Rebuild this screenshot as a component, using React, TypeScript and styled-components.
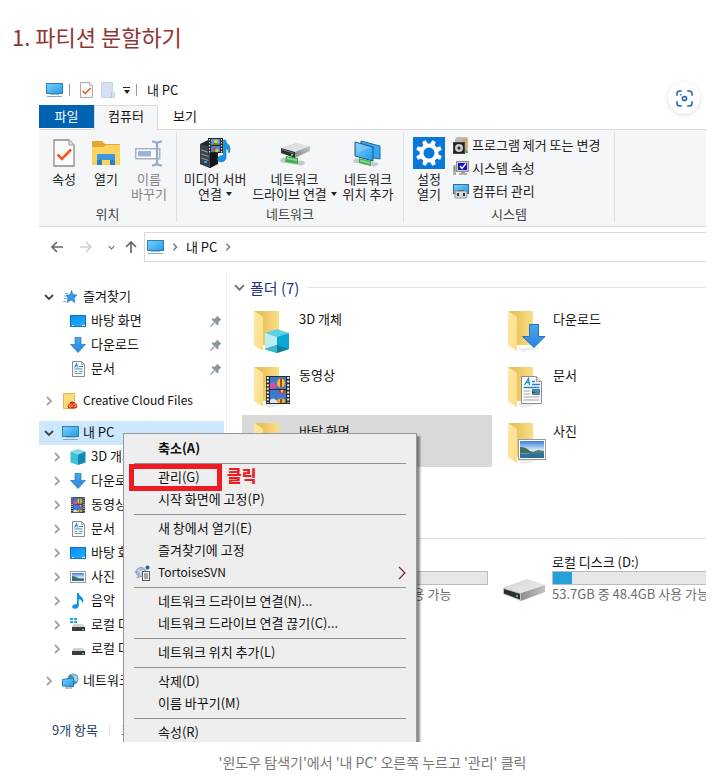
import React from "react";
import styled, { createGlobalStyle, css } from "styled-components";

const GlobalStyle = createGlobalStyle`
  * { box-sizing: border-box; }
  body {
    margin: 0;
    background: #fff;
    color: #111;
    font-family: "Noto Sans CJK KR", "Noto Sans", sans-serif;
    font-size: 13px;
    line-height: 16px;
  }
  button {
    margin: 0;
    padding: 0;
    border: 0;
    background: none;
    color: inherit;
    font: inherit;
    text-align: left;
    white-space: nowrap;
  }
  svg { display: block; flex: none; }
`;

/* ---------- icons ---------- */

const HiddenSvg = styled.svg`
  position: absolute;
`;

const Gradients = () => (
  <HiddenSvg width="0" height="0" aria-hidden="true">
    <defs>
      <linearGradient id="screen" x1="0" y1="0" x2="1" y2="1">
        <stop offset="0" stopColor="#7fd0fb" />
        <stop offset="1" stopColor="#1e9bea" />
      </linearGradient>
      <linearGradient id="desk" x1="0" y1="0" x2="1" y2="1">
        <stop offset="0" stopColor="#0b8cf5" />
        <stop offset="1" stopColor="#22b2fb" />
      </linearGradient>
      <linearGradient id="folderBack" x1="0" y1="0" x2="1" y2="0">
        <stop offset="0.3" stopColor="#e9c25e" />
        <stop offset="1" stopColor="#fbdf85" />
      </linearGradient>
      <linearGradient id="folderFlap" x1="0" y1="0" x2="1" y2="1">
        <stop offset="0" stopColor="#ffe9a8" />
        <stop offset="1" stopColor="#fbdb86" />
      </linearGradient>
      <linearGradient id="arrow" x1="0" y1="0" x2="0" y2="1">
        <stop offset="0" stopColor="#49a5ee" />
        <stop offset="1" stopColor="#2a86dc" />
      </linearGradient>
      <linearGradient id="driveTop" x1="0" y1="0" x2="1" y2="1">
        <stop offset="0" stopColor="#d2d4d6" />
        <stop offset="1" stopColor="#ececee" />
      </linearGradient>
      <linearGradient id="driveSide" x1="0" y1="0" x2="1" y2="0">
        <stop offset="0" stopColor="#8d8f91" />
        <stop offset="1" stopColor="#bfc1c3" />
      </linearGradient>
      <linearGradient id="sky" x1="0" y1="0" x2="0" y2="1">
        <stop offset="0" stopColor="#3f7fd6" />
        <stop offset="0.55" stopColor="#d6ecfb" />
        <stop offset="1" stopColor="#3a7fb5" />
      </linearGradient>
    </defs>
  </HiddenSvg>
);

const MonitorIcon = () => (
  <svg width="17" height="16" viewBox="0 0 17 16">
    <rect x="0.5" y="1.5" width="16" height="10" fill="url(#screen)" stroke="#2c7fb8" />
    <rect x="7" y="12" width="3" height="1" fill="#b7c9d6" />
    <rect x="4" y="12" width="9" height="1" fill="#a9bfce" />
    <rect x="1" y="14" width="15" height="1" fill="#8fa6b5" />
  </svg>
);

const CheckPageIcon = ({ width, height }: { width: number; height: number }) => (
  <svg width={width} height={height} viewBox="0 0 22 28" preserveAspectRatio="none">
    <path d="M1 1h15l5 5v21H1z" fill="#fbfbfb" stroke="#8b8b8b" strokeWidth="1.3" />
    <path d="M16 1v5h5" fill="#e5e5e5" stroke="#9b9b9b" />
    <path d="M4.500 15.500l4.500 4.500 9-9.500" fill="none" stroke="#f0591e" strokeWidth="2.600" />
  </svg>
);

const PaleFolderIcon = () => (
  <svg width="14" height="16" viewBox="0 0 14 16">
    <path d="M0.500 0.500h11v9l2 1v5H0.500z" fill="#d5e1f3" stroke="#c3d2ea" />
    <path d="M10.500 10v5" stroke="#b5c7e4" />
  </svg>
);

const OpenFolderIcon = () => (
  <svg width="28" height="26" viewBox="0 0 28 26">
    <path d="M0 2q0-1 1-1h9l3 3h14q1 0 1 1v20H0z" fill="#e5a52e" />
    <path d="M0 7h11l3-2h14v19q0 1-1 1H1q-1 0-1-1z" fill="#fcd35f" />
    <path d="M5 25V15q0-1 1-1h16q1 0 1 1v10h-5v-5h-8v5z" fill="#3a97e2" />
    <path d="M5 20l5 0v5H5zM18 20h5v5h-5z" fill="#2d7fcb" />
  </svg>
);

const RenameIcon = () => (
  <svg width="28" height="27" viewBox="0 0 28 27">
    <rect x="0.750" y="8.750" width="24" height="10" fill="#fafcfe" stroke="#a3b2c9" strokeWidth="1.500" />
    <rect x="3" y="11" width="13" height="5.500" fill="#9fb3d1" />
    <path d="M17 1.500q5 0 5 3v18q0 3-5 3M27 1.500q-5 0-5 3v18q0 3 5 3" fill="none" stroke="#96a8c4" strokeWidth="2.200" />
  </svg>
);

const MediaServerIcon = () => (
  <svg width="32" height="32" viewBox="0 0 32 32">
    <path d="M1 7l8-4 10 2v21l-8 5-10-4z" fill="#23272c" />
    <path d="M1 7l10 3v21L1 27z" fill="#3b4248" />
    <path d="M11 10l8-4v21l-8 4z" fill="#14171a" />
    <path d="M2.500 13l7 2.500M2.500 17l7 2.500M2.500 21l7 2.500" stroke="#8d99a3" strokeWidth="1.200" />
    <rect x="5" y="24" width="3" height="2" fill="#29a8f0" />
    <rect x="9" y="1" width="15" height="15" fill="#262626" />
    <path d="M10.500 2v14M22.500 2v14" stroke="#eee" strokeWidth="1.200" strokeDasharray="1.500 1.500" />
    <rect x="12" y="2" width="9" height="6" fill="#4f9be8" />
    <rect x="12" y="9" width="9" height="6" fill="#3f86d8" />
    <circle cx="17" cy="4.500" r="2" fill="#f2c81d" />
    <path d="M12 8l3-2 6 1v1z" fill="#4c8a35" />
    <circle cx="15" cy="12" r="1.800" fill="#e0402e" />
    <circle cx="18" cy="13.500" r="1.800" fill="#e9c61b" />
    <path d="M24.500 3h2q0.500 3 3 5 3 3 0.500 8-0.500-4-3-5v10q-1 4-5 4-3.500-0.500-3.500-3 0.500-3.500 6-3.500z" fill="#1296e6" stroke="#0b6fb5" strokeWidth="0.600" />
  </svg>
);

const Plug = () => (
  <g>
    <path d="M1 20l3-2.500 4 1 12 2 5 0.500 1 3-4 2-3-1-12-2-5-0.500z" fill="#c7cacc" />
    <path d="M7 16l12 2v6L6 22z" fill="#3fae49" />
    <path d="M8 17.500l10 1.500v2L8 19.500z" fill="#7fdc83" />
  </g>
);

const NetDriveIcon = () => (
  <svg width="32" height="26" viewBox="0 0 32 26">
    <Plug />
    <path d="M2 8L17 3l14 3-13 6z" fill="url(#driveTop)" />
    <path d="M2 8l14 4v6L2 13z" fill="#2d2d2d" />
    <path d="M16 12l15-6v5l-15 7z" fill="url(#driveSide)" />
    <path d="M3 9l12 3.700v1L3 10z" fill="#777" />
    <rect x="12" y="14" width="2" height="2" fill="#43e04a" />
  </svg>
);

const NetPlaceIcon = () => (
  <svg width="30" height="28" viewBox="0 0 30 28">
    <path d="M8 2l19 5v13L8 17z" fill="#3aa7f0" stroke="#1c6ca8" />
    <path d="M2 3l18 5v14L2 17z" fill="url(#screen)" stroke="#20557d" />
    <path d="M3 4l15 4.500L4 14z" fill="#8fd3fb" opacity="0.500" />
    <path d="M0 21l4-1.500 17 3.500 4 1 0 2-3 1.500-16-3.500-5 0z" fill="#c7cacc" />
    <path d="M6 19l12 3 0 5-12-3z" fill="#3fae49" />
    <path d="M7 20.500l10 2.500v2l-10-2.500z" fill="#7fdc83" />
  </svg>
);

const GearIcon = () => (
  <svg width="32" height="32" viewBox="0 0 32 32">
    <rect width="32" height="32" fill="#0878d8" />
    <circle cx="16" cy="16" r="7.500" fill="none" stroke="#fff" strokeWidth="4" />
    {[22.5, 67.5, 112.5, 157.5, 202.5, 247.5, 292.5, 337.5].map((a) => (
      <path key={a} d="M13.500 7.500l0.600-4.500h3.800l0.600 4.500z" fill="#fff" transform={`rotate(${a} 16 16)`} />
    ))}
  </svg>
);

const UninstallIcon = () => (
  <svg width="16" height="17" viewBox="0 0 16 17">
    <path d="M2 2l2-2h10l1 2v14H2z" fill="#b9bab4" />
    <path d="M9 2h5v10h-5z" fill="#e6a15f" />
    <path d="M10 9l5 6v1h-6z" fill="#6fa47c" />
    <rect x="0.500" y="5.500" width="11" height="11" fill="#1f2220" stroke="#444" />
    <circle cx="6" cy="11" r="4" fill="#c9cfcc" />
    <circle cx="6" cy="11" r="1.500" fill="#1f2220" />
  </svg>
);

const SystemIcon = () => (
  <svg width="16" height="16" viewBox="0 0 16 16">
    <rect x="0" y="5" width="3" height="10" fill="#b4b4ae" />
    <rect x="1" y="7" width="1" height="4" fill="#3da04a" />
    <rect x="3.500" y="1.500" width="12" height="10" fill="#cfcec8" stroke="#8f8f88" />
    <rect x="5" y="3" width="9" height="7" fill="#1414c8" />
    <path d="M7 6l2 2.500 4-5" fill="none" stroke="#fff" strokeWidth="1.400" />
    <rect x="8" y="12" width="4" height="1" fill="#9a9a94" />
    <rect x="6" y="13" width="8" height="2" fill="#b3b2ab" />
  </svg>
);

const ManageIcon = () => (
  <svg width="16" height="16" viewBox="0 0 16 16">
    <rect x="0.500" y="1.500" width="15" height="9" fill="url(#screen)" stroke="#2c6f9f" />
    <path d="M5.500 8.500v-1h5v1" fill="none" stroke="#555" />
    <rect x="2" y="8" width="12" height="7" rx="1" fill="#d4d6d8" stroke="#7b7d80" strokeWidth="0.800" />
    <rect x="4" y="10" width="2" height="3" fill="#333" />
    <rect x="10" y="10" width="2" height="3" fill="#333" />
  </svg>
);

const Chevron = ({ open, color, size = 10 }: { open?: boolean; color: string; size?: number }) => (
  <svg width={size} height={size} viewBox="0 0 10 10">
    <path d={open ? "M1 3l4 4 4-4" : "M3 1l4 4-4 4"} fill="none" stroke={color} strokeWidth="1.800" />
  </svg>
);

const ArrowIcon = ({ angle, color }: { angle: number; color: string }) => (
  <svg width="14" height="14" viewBox="0 0 14 14">
    <path d="M13 7H2M7 2L2 7l5 5" fill="none" stroke={color} strokeWidth="1.700" transform={`rotate(${angle} 7 7)`} />
  </svg>
);

const Caret = () => (
  <svg width="6" height="4" viewBox="0 0 6 4">
    <path d="M0 0h6L3 4z" fill="#222" />
  </svg>
);

const StarIcon = () => (
  <svg width="16" height="16" viewBox="0 0 16 16">
    <path d="M9.500 1.500l1.500 4 4 0.500-3 3 1 4.500-4-2.500-4 2.500 1-4.500-2-3h4z" fill="#2f9be8" stroke="#1773bd" strokeWidth="0.600" />
    <path d="M3 4.500h3M2 7h3M2 9.500h3M1 12.500h3" stroke="#63b7ee" strokeWidth="1.200" />
  </svg>
);

const DesktopIcon = () => (
  <svg width="16" height="16" viewBox="0 0 16 16">
    <rect x="0.500" y="2.500" width="15" height="11" fill="url(#desk)" stroke="#1272c2" />
    <path d="M2 12.500h2M12 12.500h3" stroke="#d5efff" />
  </svg>
);

const DownIcon = () => (
  <svg width="16" height="16" viewBox="0 0 16 16">
    <path d="M5 0.500h6v7h4.500L8 15.500 0.500 7.500H5z" fill="url(#arrow)" stroke="#2375bd" strokeWidth="0.700" />
  </svg>
);

const DocIcon = () => (
  <svg width="13" height="16" viewBox="0 0 13 16">
    <path d="M0.500 0.500h9l3 3v12H0.500z" fill="#fdfdfd" stroke="#8c8c8c" />
    <path d="M9.500 0.500v3h3" fill="none" stroke="#999" strokeWidth="0.700" />
    <path d="M2.500 6.500L4.500 3l1 3.500M7 5.500h4M2.500 8h8" fill="none" stroke="#1f87cf" strokeWidth="1.200" />
    <path d="M2.500 10.500h3M2.500 12.500h8M7 10.500h4" stroke="#7f97a6" />
  </svg>
);

const CreativeCloudIcon = () => (
  <svg width="15" height="16" viewBox="0 0 15 16">
    <path d="M0.500 0.500h11v15H0.500z" fill="#fbdc7d" stroke="#e2b64c" />
    <path d="M7 15.500h5q2.500-0.300 2.500-2.800-0.300-2-2-2.400Q11 8 8.500 8.500 6.500 9.300 6.300 11 4.500 11.500 4.500 13.200q0.200 2.200 2.500 2.300z" fill="#e0261b" />
    <path d="M10 13.500l-2-2q-2 0-2 1.300 0.200 1.200 1.500 1.200 1 0 2-1.500t2-1.500q1.500 0.200 1.500 1.500t-1.500 1.400" fill="none" stroke="#fbdc7d" strokeWidth="0.900" />
  </svg>
);

const CubeShape = () => (
  <g>
    <path d="M12 0l12 4-12 5L0 4z" fill="#5fd0e3" />
    <path d="M0 4l12 4v16L0 20z" fill="#b9ecf3" />
    <path d="M12 8l12-4v16l-12 4z" fill="#0aa6d6" />
    <path d="M0 20l12-4 12 4-12 4z" fill="#0f7d9c" />
    <path d="M0 20l12-4v8z" fill="#3fb5c6" />
  </g>
);

const SmallCubeIcon = () => (
  <svg width="16" height="16" viewBox="0 0 16 16">
    <path d="M8 0l7.500 2.500L8 5.500 0.500 2.500z" fill="#7fdbe8" />
    <path d="M0.500 2.500L8 5.500V16l-7.500-2.500z" fill="#3fc0d8" />
    <path d="M8 5.500l7.500-3v11L8 16z" fill="#1189b0" />
  </svg>
);

const FilmShape = () => (
  <g>
    <rect width="24" height="28" fill="#2c2c2c" />
    <path d="M1.800 1v27M22.200 1v27" stroke="#f3f3f3" strokeWidth="2" strokeDasharray="2 1.600" />
    <rect x="4" y="1" width="16" height="12" fill="#3f78cf" />
    <rect x="4" y="14" width="16" height="13" fill="#3f78cf" />
    <path d="M4 8l4-2 3 4-3 3H4z" fill="#d8509a" />
    <ellipse cx="15" cy="7" rx="4" ry="4.500" fill="#f0c419" />
    <path d="M15 2.500v9" stroke="#b31f24" strokeWidth="1.600" />
    <path d="M12 14h8l-4 5z" fill="#d42b2b" />
    <path d="M14.500 14l1.500 4 1.500-4z" fill="#f3cd2b" />
    <path d="M4 24q3-3 6 0t3 3H4z" fill="#dfe8f8" />
    <ellipse cx="15" cy="25" rx="4" ry="2.500" fill="#e6b91e" />
    <path d="M15 23v4" stroke="#b31f24" strokeWidth="1.600" />
    <rect y="27" width="24" height="1" fill="#2c2c2c" />
  </g>
);

const FilmIcon = () => (
  <svg width="14" height="16" viewBox="0 0 24 28" preserveAspectRatio="none">
    <FilmShape />
  </svg>
);

const PhotoShape = () => (
  <g>
    <rect x="0.500" y="0.500" width="27" height="20" fill="#fff" stroke="#9a9a9a" />
    <rect x="2" y="2" width="24" height="17" fill="url(#sky)" />
    <path d="M2 8q6 0 10 4l6 2H2z" fill="#3f7250" />
    <path d="M12 14l8-3 6 1v3H10z" fill="#4f7f66" />
    <path d="M2 14.500h24V19H2z" fill="#2f6f9f" />
  </g>
);

const PhotoIcon = () => (
  <svg width="16" height="12" viewBox="0 0 16 12">
    <rect x="0.500" y="0.500" width="15" height="11" fill="#fff" stroke="#9a9a9a" />
    <rect x="2" y="2" width="12" height="8" fill="url(#sky)" />
    <path d="M2 5q4 0 7 2.500h5V8H2z" fill="#3f7250" />
    <path d="M2 8h12v2H2z" fill="#2f6f9f" />
  </svg>
);

const MusicIcon = () => (
  <svg width="12" height="16" viewBox="0 0 12 16">
    <path d="M5 0h1.600q0.400 2.500 3 4 3 2.500 1 6.500 0-3-3.800-4.500V12.500q-0.300 3-3.500 3.300Q0.200 15.800 0.200 13.500 0.400 11 5 11z" fill="#0d95ea" />
  </svg>
);

const DiskIcon = ({ system }: { system?: boolean }) => (
  <svg width="16" height="16" viewBox="0 0 16 16">
    {system && <path d="M0 1h3v2H0zM4 1h3v2H4zM0 4h3v2H0zM4 4h3v2H4z" fill="#13a9ee" />}
    <path d="M4 7h9l2.500 3.500h-14z" fill="#d3d4d6" />
    <rect x="2" y="10" width="13" height="4" fill="#3a3d40" />
    <rect x="12" y="12" width="2" height="1" fill="#4be04e" />
  </svg>
);

const NetworkIcon = () => (
  <svg width="17" height="16" viewBox="0 0 17 16">
    <circle cx="11" cy="6" r="5.500" fill="#4f8db5" />
    <path d="M8.500 1.500q3.500 1 3 3.500t3.500 4q1.500-3.500-0.500-6t-6-1.500z" fill="#a9d0e0" />
    <path d="M0.500 6.500l11-1.500v8.500L0.500 13z" fill="url(#screen)" stroke="#2576ad" />
    <path d="M3 15h7" stroke="#6e8ca0" />
  </svg>
);

const PinIcon = () => (
  <svg width="12" height="12" viewBox="0 0 12 12">
    <path d="M7 0.500L11.500 5l-1.500 0.500-1.500 1.500v2.500l-1 1L1.500 4.500l1-1H5L6.500 2z" fill="#8b969e" />
    <path d="M4 8L0.500 11.500" stroke="#8b969e" strokeWidth="1.300" />
  </svg>
);

const TortoiseIcon = () => (
  <svg width="16" height="16" viewBox="0 0 16 16">
    <ellipse cx="7" cy="7" rx="5" ry="4.500" fill="#a9bfe6" stroke="#7c93bd" strokeWidth="0.800" />
    <path d="M4 5l3 2 3-2M7 7v4" fill="none" stroke="#e2eaf8" />
    <path d="M0 7l3-1v3zM2 13l3-3 2 1-2 2z" fill="#8fa5cc" />
    <circle cx="13.500" cy="2.500" r="2" fill="#2e5f86" />
    <rect x="8.500" y="6.500" width="7" height="9" fill="#f4f4f4" stroke="#5b5b5b" />
    <path d="M10 9h4M10 11h4M10 13h4" stroke="#555" />
  </svg>
);

const LensIcon = () => (
  <svg width="17" height="17" viewBox="0 0 18 18" fill="none" stroke="#1763b5" strokeWidth="1.600" strokeLinecap="round">
    <path d="M1 5.500V4q0-3 3-3h1.500M12.500 1H14q3 0 3 3v1.500M17 12.500V14q0 3-3 3h-1.500M5.500 17H4q-3 0-3-3v-1.500" />
    <circle cx="9" cy="9" r="2.200" />
    <path d="M5 5h0.100" />
  </svg>
);

const BigDriveIcon = () => (
  <svg width="44" height="24" viewBox="0 0 44 24">
    <path d="M1 9.500L25 1l18 6-25 8z" fill="url(#driveTop)" />
    <path d="M1 9.500L19 15v8L1 16z" fill="#bcbec0" />
    <path d="M2 11l16 5v5.500L2 15.500z" fill="#292b2d" />
    <path d="M19 15l24-8v7l-24 9z" fill="url(#driveSide)" />
    <rect x="14" y="17" width="2" height="2" fill="#39d843" />
  </svg>
);

type FolderKind = "cube" | "down" | "film" | "doc" | "photo" | "desktop" | "music";

const FolderIcon = ({ kind }: { kind: FolderKind }) => (
  <svg width="40" height="44" viewBox="0 0 40 44">
    <path d="M9 37l28-1-22 5z" fill="#ededed" />
    <path d="M0 0h25v34H6z" fill="url(#folderBack)" />
    <path d="M0 0l8 5q1 1 1 2v33L1 35q-1-1-1-2z" fill="url(#folderFlap)" />
    {kind === "cube" && (
      <g transform="translate(11 18)">
        <CubeShape />
      </g>
    )}
    {kind === "down" && (
      <path d="M21.500 13.500h9v12h6.500L26 36.500 14.500 25.500h7z" fill="url(#arrow)" stroke="#2375bd" />
    )}
    {kind === "film" && (
      <g transform="translate(12 9)">
        <FilmShape />
      </g>
    )}
    {kind === "doc" && (
      <g transform="translate(13 9)">
        <path d="M0.500 0.500h15l5 5v22H0.500z" fill="#fdfdfd" stroke="#8c8c8c" />
        <path d="M15.500 0.500v5h5" fill="#e4e4e4" stroke="#999" />
        <path d="M3.500 9L7.500 2.500 8.500 9M5 6.500h3M11 5.500h3M11 8.500h8M2.500 11.500h16" fill="none" stroke="#1f87cf" strokeWidth="1.300" />
        <path d="M2.500 15h7M2.500 18h7M2.500 21h16M2.500 24h16" stroke="#a3a3a3" />
        <rect x="11" y="13" width="8" height="6" fill="#4c86a8" />
        <path d="M11 15l4 2h-4z" fill="#24543a" />
      </g>
    )}
    {kind === "photo" && (
      <g transform="translate(10 16)">
        <PhotoShape />
      </g>
    )}
  </svg>
);

/* ---------- layout ---------- */

const Article = styled.article`
  padding: 21px 14px 12px 12px;
`;

const Heading = styled.h2`
  margin: 0;
  color: #8f3531;
  font-size: 22px;
  font-weight: 400;
  line-height: 30px;
`;

const Figure = styled.figure`
  margin: 24px 0 0 27px;
`;

const Caption = styled.figcaption`
  margin-top: 10px;
  color: #777;
  font-size: 14px;
  line-height: 20px;
  text-align: center;
`;

const Explorer = styled.div`
  position: relative;
  overflow: hidden;
`;

const TitleBar = styled.header`
  display: flex;
  align-items: center;
  height: 30px;
  padding: 0 7px;
  gap: 8px;
`;

const QuickDivider = styled.span`
  width: 1px;
  height: 12px;
  margin: 0 2px 0 -2px;
  background: #999;
`;

const QuickButton = styled.button`
  display: grid;
  gap: 2px;
  justify-items: center;
`;

const QuickBar = styled.span`
  width: 7px;
  height: 1px;
  background: #222;
`;

const LensButton = styled.button`
  position: absolute;
  top: 7px;
  right: 6px;
  display: grid;
  place-items: center;
  width: 32px;
  height: 32px;
  border-radius: 50%;
  background: #fff;
  box-shadow: 0 1px 5px rgba(0, 0, 0, 0.14);
`;

const Tabs = styled.div`
  display: flex;
  height: 25px;
  border-bottom: 1px solid #d9dadb;
`;

const Tab = styled.button<{ $kind?: "file" | "active" }>`
  width: ${(p) => (p.$kind === "file" ? 55 : p.$kind === "active" ? 64 : 54)}px;
  height: 23px;
  padding-bottom: 2px;
  text-align: center;
  ${(p) =>
    p.$kind === "file" &&
    css`
      background: #0063b1;
      color: #fff;
    `}
  ${(p) =>
    p.$kind === "active" &&
    css`
      height: 25px;
      padding-bottom: 4px;
      border: 1px solid #d9dadb;
      border-bottom: 0;
      background: #f5f6f7;
    `}
`;

const Ribbon = styled.div`
  display: flex;
  height: 97px;
  padding: 2px 0 4px;
  border-bottom: 1px solid #d9dadb;
  background: #f5f6f7;
`;

const RibbonGroup = styled.section<{ $width: number }>`
  display: flex;
  flex: none;
  flex-direction: column;
  justify-content: space-between;
  width: ${(p) => p.$width}px;
  border-right: 1px solid #dfe0e1;
`;

const GroupButtons = styled.div`
  display: flex;
  align-items: flex-start;
  padding-left: 4px;
`;

const GroupName = styled.div`
  color: #444;
  text-align: center;
`;

const BigButton = styled.button<{ $width: number; $disabled?: boolean }>`
  width: ${(p) => p.$width}px;
  color: ${(p) => (p.$disabled ? "#858585" : "#222")};
  line-height: 15px;
  text-align: center;
`;

const BigIcon = styled.span`
  display: grid;
  place-items: center;
  height: 36px;
  margin-top: 3px;
`;

const LabelLine = styled.span`
  display: flex;
  align-items: center;
  justify-content: center;
  gap: 4px;
`;

const SmallButtons = styled.div`
  display: flex;
  flex-direction: column;
  gap: 7px;
  padding: 5px 0 0 3px;
`;

const SmallButton = styled.button`
  display: flex;
  align-items: center;
  gap: 3px;
  height: 16px;
  color: #222;
`;

const AddressRow = styled.div`
  display: flex;
  align-items: center;
  padding-top: 5px;
`;

const NavButtons = styled.div`
  display: flex;
  align-items: center;
  width: 105px;
  padding-left: 11px;
`;

const NavButton = styled.button<{ $space: number }>`
  margin-right: ${(p) => p.$space}px;
`;

const AddressBox = styled.div`
  display: flex;
  flex: 1;
  align-items: center;
  gap: 7px;
  height: 30px;
  padding-left: 2px;
  border: 1px solid #d9d9d9;
  border-right: 0;
`;

const Body = styled.div`
  display: flex;
  padding-top: 10px;
`;

const Tree = styled.nav`
  flex: none;
  width: 188px;
  padding: 13px 2px 17px 0;
  border-right: 1px solid #f0f0f0;
`;

const TreeGroup = styled.div`
  margin-bottom: 8px;
`;

const TreeRow = styled.button<{ $level: number; $selected?: boolean }>`
  display: flex;
  align-items: center;
  width: 100%;
  height: 24px;
  padding: 0 2px 0 ${(p) => 4 + p.$level * 8}px;
  background: ${(p) => (p.$selected ? "#cce8ff" : "none")};
`;

const ChevronSlot = styled.span`
  display: grid;
  place-items: center;
  width: 12px;
  margin-right: 7px;
`;

const IconSlot = styled.span`
  display: grid;
  place-items: center;
  width: 16px;
  margin-right: 5px;
`;

const RowText = styled.span<{ $compact?: boolean }>`
  flex: 1;
  padding-bottom: 2px;
  font-size: ${(p) => (p.$compact ? 12 : 13)}px;
`;

const Content = styled.main`
  flex: 1;
  min-width: 0;
  overflow: hidden;
  padding-left: 7px;
`;

const SectionHeader = styled.h3`
  display: flex;
  align-items: center;
  gap: 5px;
  height: 31px;
  margin: 0;
  color: #1e3287;
  font-size: 15px;
  font-weight: 400;

  &::after {
    content: "";
    flex: 1;
    height: 1px;
    margin-left: 3px;
    background: #e2e2e2;
  }
`;

const Tiles = styled.div`
  display: grid;
  grid-template-columns: 250px 250px;
  gap: 4px;
  padding-left: 8px;
`;

const Tile = styled.button<{ $selected?: boolean }>`
  display: flex;
  align-items: flex-start;
  gap: 5px;
  height: 52px;
  padding: 8px 0 0 12px;
  background: ${(p) => (p.$selected ? "#d9d9d9" : "none")};
`;

const DriveTile = styled.button`
  display: flex;
  align-items: flex-end;
  gap: 6px;
  padding-left: 6px;
`;

const DriveInfo = styled.span`
  display: grid;
  gap: 1px;
`;

const DriveBar = styled.span`
  display: block;
  width: 190px;
  height: 14px;
  border: 1px solid #bcbcbc;
  background: #e6e6e6;
`;

const DriveFill = styled.span`
  display: block;
  height: 100%;
  background: #26a0da;
`;

const Muted = styled.span`
  color: #6d6d6d;
`;

const StatusBar = styled.footer`
  display: flex;
  align-items: center;
  gap: 11px;
  height: 24px;
  padding-left: 13px;
  color: #26416a;
`;

const StatusDivider = styled.span`
  width: 1px;
  height: 12px;
  background: #e6e6e6;
`;

const Menu = styled.div`
  position: absolute;
  top: 358px;
  left: 84px;
  width: 294px;
  padding: 4px 10px;
  border: 1px solid #979797;
  background: #eee;
  box-shadow: 3px 3px 2px rgba(0, 0, 0, 0.45);
`;

const MenuItem = styled.button<{ $bold?: boolean }>`
  position: relative;
  display: flex;
  align-items: center;
  width: 100%;
  height: 22px;
  font-weight: ${(p) => (p.$bold ? 700 : 400)};
`;

const MenuIcon = styled.span`
  width: 24px;
`;

const MenuSeparator = styled.hr`
  height: 1px;
  margin: 3px 0;
  border: 0;
  background: #919191;
`;

const RedFrame = styled.span`
  position: absolute;
  top: -3px;
  left: -5px;
  width: 93px;
  height: 27px;
  border: 5px solid #ed1c24;
`;

const ClickNote = styled.strong`
  position: absolute;
  left: 93px;
  top: -3px;
  color: #ed1c24;
  font-size: 16px;
  font-weight: 900;
  line-height: 22px;
`;

/* ---------- data ---------- */

type Row = {
  text: string;
  icon: React.ReactNode;
  level: number;
  open?: boolean;
  leaf?: boolean;
  selected?: boolean;
  compact?: boolean;
};

const tree: Row[][] = [
  [
    { text: "즐겨찾기", icon: <StarIcon />, level: 0, open: true },
    { text: "바탕 화면", icon: <DesktopIcon />, level: 1, leaf: true },
    { text: "다운로드", icon: <DownIcon />, level: 1, leaf: true },
    { text: "문서", icon: <DocIcon />, level: 1, leaf: true },
  ],
  [{ text: "Creative Cloud Files", icon: <CreativeCloudIcon />, level: 0, compact: true }],
  [
    { text: "내 PC", icon: <MonitorIcon />, level: 0, open: true, selected: true },
    { text: "3D 개체", icon: <SmallCubeIcon />, level: 1 },
    { text: "다운로드", icon: <DownIcon />, level: 1 },
    { text: "동영상", icon: <FilmIcon />, level: 1 },
    { text: "문서", icon: <DocIcon />, level: 1 },
    { text: "바탕 화면", icon: <DesktopIcon />, level: 1 },
    { text: "사진", icon: <PhotoIcon />, level: 1 },
    { text: "음악", icon: <MusicIcon />, level: 1 },
    { text: "로컬 디스크 (C:)", icon: <DiskIcon system />, level: 1 },
    { text: "로컬 디스크 (D:)", icon: <DiskIcon />, level: 1 },
  ],
  [{ text: "네트워크", icon: <NetworkIcon />, level: 0 }],
];

const folders: { text: string; kind: FolderKind; selected?: boolean }[] = [
  { text: "3D 개체", kind: "cube" },
  { text: "다운로드", kind: "down" },
  { text: "동영상", kind: "film" },
  { text: "문서", kind: "doc" },
  { text: "바탕 화면", kind: "desktop", selected: true },
  { text: "사진", kind: "photo" },
  { text: "음악", kind: "music" },
];

const drives = [
  { text: "로컬 디스크 (C:)", note: "111GB 중 64.2GB 사용 가능", used: 42 },
  { text: "로컬 디스크 (D:)", note: "53.7GB 중 48.4GB 사용 가능", used: 10 },
];

type Entry = { text: string; bold?: boolean; marked?: boolean; icon?: React.ReactNode; more?: boolean };

const menu: Entry[][] = [
  [{ text: "축소(A)", bold: true }],
  [{ text: "관리(G)", marked: true }, { text: "시작 화면에 고정(P)" }],
  [
    { text: "새 창에서 열기(E)" },
    { text: "즐겨찾기에 고정" },
    { text: "TortoiseSVN", icon: <TortoiseIcon />, more: true },
  ],
  [{ text: "네트워크 드라이브 연결(N)..." }, { text: "네트워크 드라이브 연결 끊기(C)..." }],
  [{ text: "네트워크 위치 추가(L)" }],
  [{ text: "삭제(D)" }, { text: "이름 바꾸기(M)" }],
  [{ text: "속성(R)" }],
];

type BigProps = { icon: React.ReactNode; lines: string[]; width: number; caret?: boolean; disabled?: boolean };

const RibbonButton = ({ icon, lines, width, caret, disabled }: BigProps) => (
  <BigButton $width={width} $disabled={disabled} disabled={disabled}>
    <BigIcon>{icon}</BigIcon>
    {lines.map((line, i) => (
      <LabelLine key={line}>
        {line}
        {caret && i === lines.length - 1 && <Caret />}
      </LabelLine>
    ))}
  </BigButton>
);

const App = () => (
  <>
    <GlobalStyle />
    <Gradients />
    <Article>
      <Heading>1. 파티션 분할하기</Heading>
      <Figure>
        <Explorer>
          <TitleBar>
            <MonitorIcon />
            <QuickDivider />
            <CheckPageIcon width={13} height={16} />
            <PaleFolderIcon />
            <QuickButton aria-label="빠른 실행 도구 모음">
              <QuickBar />
              <Caret />
            </QuickButton>
            <QuickDivider />
            <span>내 PC</span>
          </TitleBar>
          <LensButton aria-label="이미지 검색">
            <LensIcon />
          </LensButton>

          <Tabs>
            <Tab $kind="file">파일</Tab>
            <Tab $kind="active">컴퓨터</Tab>
            <Tab>보기</Tab>
          </Tabs>

          <Ribbon>
            <RibbonGroup $width={138}>
              <GroupButtons>
                <RibbonButton width={42} icon={<CheckPageIcon width={22} height={28} />} lines={["속성"]} />
                <RibbonButton width={42} icon={<OpenFolderIcon />} lines={["열기"]} />
                <RibbonButton width={44} icon={<RenameIcon />} lines={["이름", "바꾸기"]} disabled />
              </GroupButtons>
              <GroupName>위치</GroupName>
            </RibbonGroup>
            <RibbonGroup $width={227}>
              <GroupButtons>
                <RibbonButton width={68} icon={<MediaServerIcon />} lines={["미디어 서버", "연결"]} caret />
                <RibbonButton width={91} icon={<NetDriveIcon />} lines={["네트워크", "드라이브 연결"]} caret />
                <RibbonButton width={56} icon={<NetPlaceIcon />} lines={["네트워크", "위치 추가"]} />
              </GroupButtons>
              <GroupName>네트워크</GroupName>
            </RibbonGroup>
            <RibbonGroup $width={211}>
              <GroupButtons>
                <RibbonButton width={42} icon={<GearIcon />} lines={["설정", "열기"]} />
                <SmallButtons>
                  <SmallButton>
                    <UninstallIcon />
                    프로그램 제거 또는 변경
                  </SmallButton>
                  <SmallButton>
                    <SystemIcon />
                    시스템 속성
                  </SmallButton>
                  <SmallButton>
                    <ManageIcon />
                    컴퓨터 관리
                  </SmallButton>
                </SmallButtons>
              </GroupButtons>
              <GroupName>시스템</GroupName>
            </RibbonGroup>
          </Ribbon>

          <AddressRow>
            <NavButtons>
              <NavButton $space={15} aria-label="뒤로">
                <ArrowIcon angle={0} color="#666" />
              </NavButton>
              <NavButton $space={15} aria-label="앞으로">
                <ArrowIcon angle={180} color="#d2d2d2" />
              </NavButton>
              <NavButton $space={9} aria-label="최근 위치">
                <Chevron open color="#777" size={7} />
              </NavButton>
              <NavButton $space={0} aria-label="위로">
                <ArrowIcon angle={90} color="#666" />
              </NavButton>
            </NavButtons>
            <AddressBox>
              <MonitorIcon />
              <Chevron color="#777" size={8} />
              <span>내 PC</span>
              <Chevron color="#777" size={8} />
            </AddressBox>
          </AddressRow>

          <Body>
            <Tree>
              {tree.map((group, g) => (
                <TreeGroup key={g}>
                  {group.map((row) => (
                    <TreeRow key={row.text} $level={row.level} $selected={row.selected}>
                      <ChevronSlot>
                        {!row.leaf && <Chevron open={row.open} color={row.open ? "#444" : "#a3a3a3"} />}
                      </ChevronSlot>
                      <IconSlot>{row.icon}</IconSlot>
                      <RowText $compact={row.compact}>{row.text}</RowText>
                      {row.leaf && <PinIcon />}
                    </TreeRow>
                  ))}
                </TreeGroup>
              ))}
            </Tree>
            <Content>
              <SectionHeader>
                <Chevron open color="#777" size={11} />
                폴더 (7)
              </SectionHeader>
              <Tiles>
                {folders.map((f) => (
                  <Tile key={f.text} $selected={f.selected}>
                    <FolderIcon kind={f.kind} />
                    {f.text}
                  </Tile>
                ))}
              </Tiles>
              <SectionHeader>
                <Chevron open color="#777" size={11} />
                장치 및 드라이브 (2)
              </SectionHeader>
              <Tiles>
                {drives.map((d) => (
                  <DriveTile key={d.text}>
                    <BigDriveIcon />
                    <DriveInfo>
                      <span>{d.text}</span>
                      <DriveBar>
                        <DriveFill style={{ width: `${d.used}%` }} />
                      </DriveBar>
                      <Muted>{d.note}</Muted>
                    </DriveInfo>
                  </DriveTile>
                ))}
              </Tiles>
            </Content>
          </Body>

          <StatusBar>
            <span>9개 항목</span>
            <StatusDivider />
            <span>1개 항목 선택함</span>
          </StatusBar>

          <Menu role="menu">
            {menu.map((group, g) => (
              <React.Fragment key={g}>
                {g > 0 && <MenuSeparator />}
                {group.map((item) => (
                  <MenuItem key={item.text} role="menuitem" $bold={item.bold}>
                    <MenuIcon>{item.icon}</MenuIcon>
                    <RowText $compact={item.more}>{item.text}</RowText>
                    {item.more && (
                      <svg width="8" height="14" viewBox="0 0 8 14">
                        <path d="M1 1l6 6-6 6" fill="none" stroke="#7a2430" strokeWidth="1.200" />
                      </svg>
                    )}
                    {item.marked && <RedFrame />}
                    {item.marked && <ClickNote>클릭</ClickNote>}
                  </MenuItem>
                ))}
              </React.Fragment>
            ))}
          </Menu>
        </Explorer>
        <Caption>'윈도우 탐색기'에서 '내 PC' 오른쪽 누르고 '관리' 클릭</Caption>
      </Figure>
    </Article>
  </>
);

export default App;
